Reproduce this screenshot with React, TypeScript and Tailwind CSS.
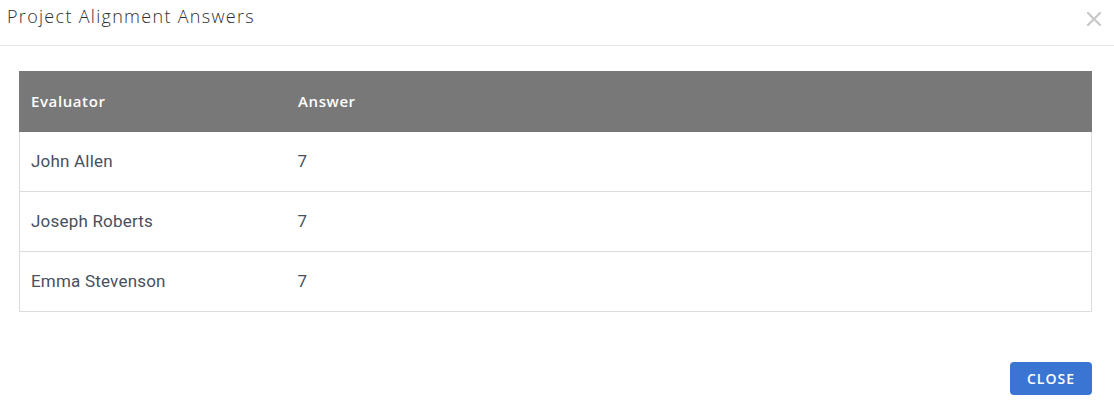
import { X } from "lucide-react";

const rows = [
  { name: "John Allen", answer: "7" },
  { name: "Joseph Roberts", answer: "7" },
  { name: "Emma Stevenson", answer: "7" },
];

export default function App() {
  return (
    <div className="h-[417px] w-[1114px] bg-white">
      <div className="flex h-[46px] items-start justify-between border-b border-[#e5e5e5] pl-[7px] pr-[8px] pt-[3px]">
        <h4 className="font-['Open_Sans',sans-serif] text-[18px] font-light leading-[26px] tracking-[1.3px] text-[#2f2f2f]">
          Project Alignment Answers
        </h4>
        <button type="button" className="mt-[4px] text-[#c8c8c8]">
          <X className="h-[24px] w-[24px]" strokeWidth={2.2} />
        </button>
      </div>

      <div className="px-[19px] pt-[25px]">
        <table className="w-[1073px] border-collapse font-['Roboto',sans-serif]">
          <thead>
            <tr className="h-[60px] bg-[#787878] text-left">
              <th className="w-[268px] border border-[#787878] pl-[11px] font-['Open_Sans',sans-serif] text-[15px] font-semibold tracking-[0.6px] text-white">
                Evaluator
              </th>
              <th className="border border-[#787878] pl-[10px] font-['Open_Sans',sans-serif] text-[15px] font-semibold tracking-[0.6px] text-white">
                Answer
              </th>
            </tr>
          </thead>
          <tbody>
            {rows.map((row) => (
              <tr key={row.name} className="h-[60px] border border-[#dcdcdc]">
                <td className="pl-[11px] text-[17px] tracking-[0.2px] text-[#485060]">{row.name}</td>
                <td className="pl-[10px] text-[17px] text-[#485060]">{row.answer}</td>
              </tr>
            ))}
          </tbody>
        </table>
      </div>

      <div className="flex justify-end pr-[22px] pt-[50px]">
        <button
          type="button"
          className="h-[33px] w-[82px] rounded-[4px] bg-[#3a75d4] font-['Open_Sans',sans-serif] text-[14px] font-semibold tracking-[1px] text-white"
        >
          CLOSE
        </button>
      </div>
    </div>
  );
}
